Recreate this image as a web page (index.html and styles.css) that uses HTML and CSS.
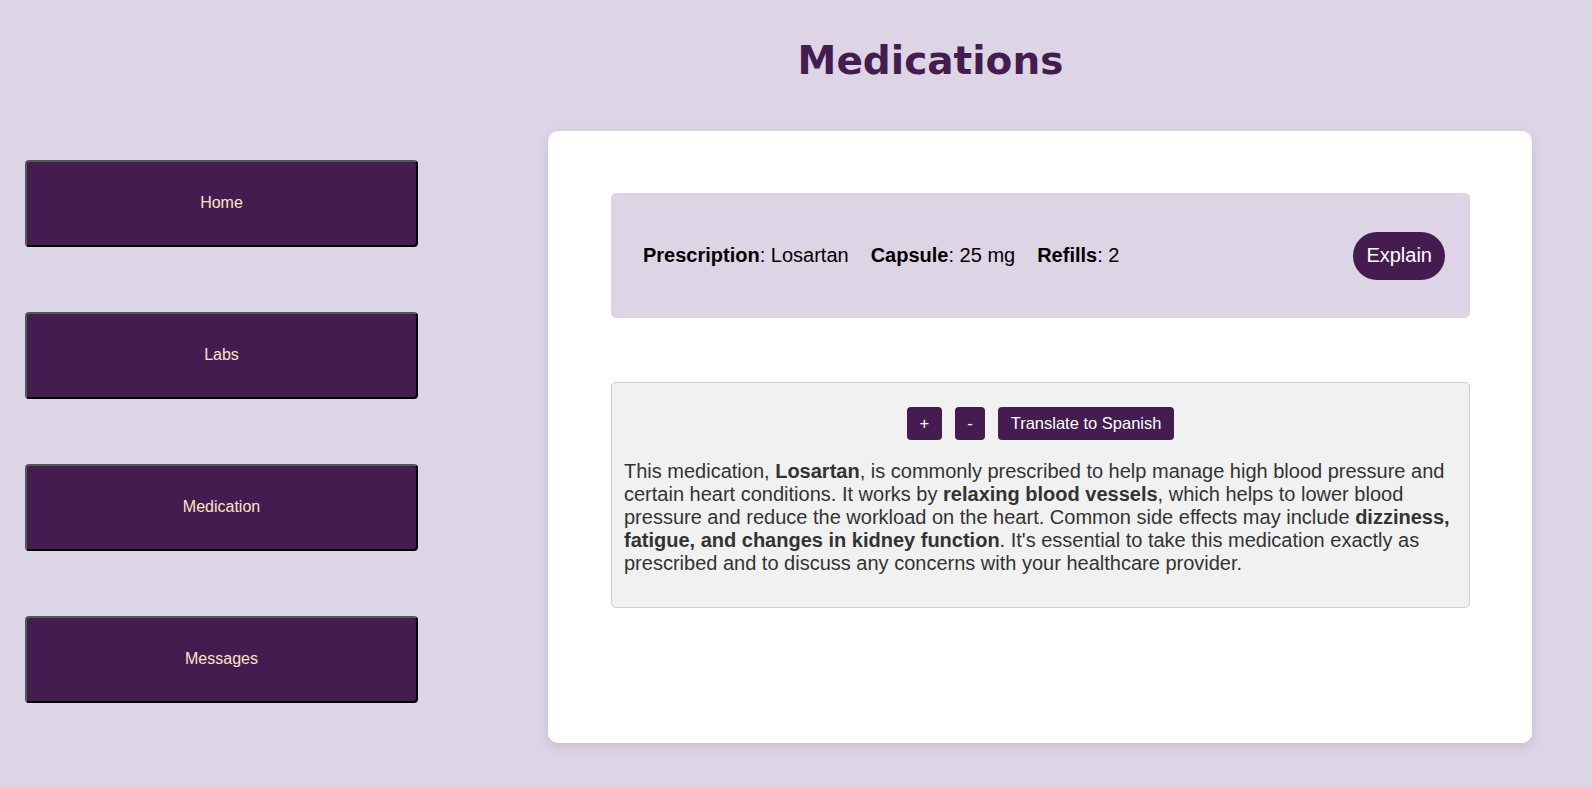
FILE: index.html
```html
<!DOCTYPE html>
<html lang="en">
<head>
<meta charset="utf-8">
<title>Medications</title>
<link rel="stylesheet" href="styles.css">
</head>
<body>
  <header class="page-header">
    <h1 class="page-title">Medications</h1>
  </header>
  <div class="layout">
    <nav class="sidebar">
      <button class="nav-btn">Home</button>
      <button class="nav-btn">Labs</button>
      <button class="nav-btn">Medication</button>
      <button class="nav-btn">Messages</button>
    </nav>
    <main class="card">
      <section class="rx">
        <div class="rx-info">
          <span><b>Prescription</b>: Losartan</span>
          <span><b>Capsule</b>: 25 mg</span>
          <span><b>Refills</b>: 2</span>
        </div>
        <button class="explain-btn">Explain</button>
      </section>
      <section class="explain-box">
        <div class="tools">
          <button class="tool-btn">+</button>
          <button class="tool-btn">-</button>
          <button class="tool-btn">Translate to Spanish</button>
        </div>
        <p class="explain-text">This medication, <b>Losartan</b>, is commonly prescribed to help manage high blood pressure and certain heart conditions. It works by <b>relaxing blood vessels</b>, which helps to lower blood pressure and reduce the workload on the heart. Common side effects may include <b>dizziness, fatigue, and changes in kidney function</b>. It's essential to take this medication exactly as prescribed and to discuss any concerns with your healthcare provider.</p>
      </section>
    </main>
  </div>
</body>
</html>
```

FILE: styles.css
```css
* {
  box-sizing: border-box;
}

html, body {
  margin: 0;
  padding: 0;
}

body {
  background: #ddd4e6;
  font-family: "Liberation Sans", Arial, sans-serif;
  height: 787px;
  overflow: hidden;
}

.page-header {
  padding-top: 38px;
  padding-left: 269px;
  text-align: center;
}

.page-title {
  margin: 0;
  font-family: "DejaVu Sans", Verdana, sans-serif;
  font-weight: bold;
  font-size: 39px;
  line-height: 46px;
  color: #441c4f;
}

.layout {
  display: flex;
  align-items: flex-start;
  margin-top: 47px;
}

.sidebar {
  display: flex;
  flex-direction: column;
  gap: 65px;
  padding-left: 25px;
  padding-top: 29px;
  width: 418px;
  flex: none;
}

.nav-btn {
  height: 87px;
  width: 393px;
  background: #441c4f;
  color: #ffe4c4;
  font-family: "Liberation Sans", Arial, sans-serif;
  font-size: 16px;
  line-height: 18px;
  border: 2px solid;
  border-color: #575757 #000 #000 #575757;
  border-radius: 4px;
  padding: 0 0 2px;
  cursor: pointer;
}

.card {
  margin-left: 130px;
  width: 984px;
  height: 612px;
  flex: none;
  background: #fff;
  border-radius: 10px;
  box-shadow: 0 4px 12px rgba(0, 0, 0, 0.1);
  padding: 62px 62px 0 63px;
}

.rx {
  display: flex;
  align-items: center;
  justify-content: space-between;
  height: 125px;
  background: #ddd4e6;
  border-radius: 5px;
  padding: 0 25px 0 32px;
}

.rx-info {
  display: flex;
  gap: 22px;
  font-size: 20px;
  color: #000;
}

.explain-btn {
  background: #441c4f;
  color: #fff;
  border: none;
  border-radius: 24px;
  font-family: "Liberation Sans", Arial, sans-serif;
  font-size: 20px;
  line-height: 23px;
  padding: 12px 13px 13px;
  cursor: pointer;
}

.explain-box {
  margin-top: 64px;
  background: #f1f1f1;
  border: 1px solid #cfcfcf;
  border-radius: 5px;
  padding: 12px;
}

.tools {
  display: flex;
  justify-content: center;
  gap: 13px;
  margin-top: 12px;
}

.tool-btn {
  background: #441c4f;
  color: #fff;
  border: none;
  border-radius: 4px;
  font-family: "Liberation Sans", Arial, sans-serif;
  font-size: 16.5px;
  line-height: 18px;
  padding: 7px 12.5px 8px;
  cursor: pointer;
}

.explain-text {
  margin: 20px 0;
  font-size: 20px;
  line-height: 23px;
  color: #333;
}
```
